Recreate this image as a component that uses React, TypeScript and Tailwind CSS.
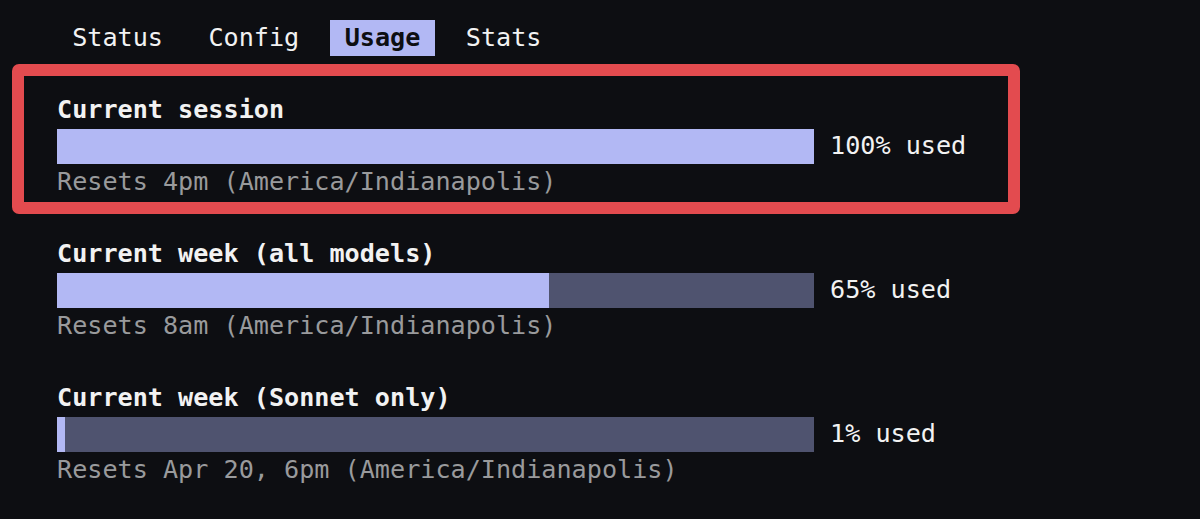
const tabs = ["Status", "Config", "Usage", "Stats"];
const active = "Usage";

const sections = [
  { title: "Current session", pct: 100, resets: "Resets 4pm (America/Indianapolis)" },
  { title: "Current week (all models)", pct: 65, resets: "Resets 8am (America/Indianapolis)" },
  { title: "Current week (Sonnet only)", pct: 1, resets: "Resets Apr 20, 6pm (America/Indianapolis)" },
];

function UsageBar({ pct }: { pct: number }) {
  return (
    <div className="flex h-9 items-start">
      <div className="mt-px h-[35px] w-[757px] bg-[#4f536f]">
        <div className="h-full bg-[#b2b8f4]" style={{ width: `${pct}%` }} />
      </div>
      <span className="ml-4 text-[#f2f2f2]">{pct}% used</span>
    </div>
  );
}

export default function App() {
  return (
    <div
      className="relative h-[519px] w-[1200px] overflow-hidden bg-[#0d0e12] pl-[57px] pt-5 text-[25.15px] leading-9"
      style={{ fontFamily: '"DejaVu Sans Mono", "Liberation Mono", monospace' }}
    >
      {/* tab bar */}
      <div className="flex h-9 whitespace-pre">
        {tabs.map((tab, i) => (
          <span key={tab} className="flex">
            {tab === active ? (
              <span className="inline-block h-9 bg-[#b2b8f4] font-bold text-[#0d0e12]"> {tab} </span>
            ) : (
              <span className="text-[#f2f2f2]"> {tab} </span>
            )}
            {i < tabs.length - 1 && <span> </span>}
          </span>
        ))}
      </div>
      <div className="h-9" />

      {sections.map((s, i) => (
        <div key={s.title}>
          <div className="h-9 font-bold text-[#f2f2f2]">{s.title}</div>
          <UsageBar pct={s.pct} />
          <div className="h-9 text-[#999a9c]">{s.resets}</div>
          {i < sections.length - 1 && <div className="h-9" />}
        </div>
      ))}

      {/* annotation highlight */}
      <div className="pointer-events-none absolute left-3 top-16 h-[150px] w-[1008px] rounded-[7px] border-[12px] border-[#e34b4f]" />
    </div>
  );
}
